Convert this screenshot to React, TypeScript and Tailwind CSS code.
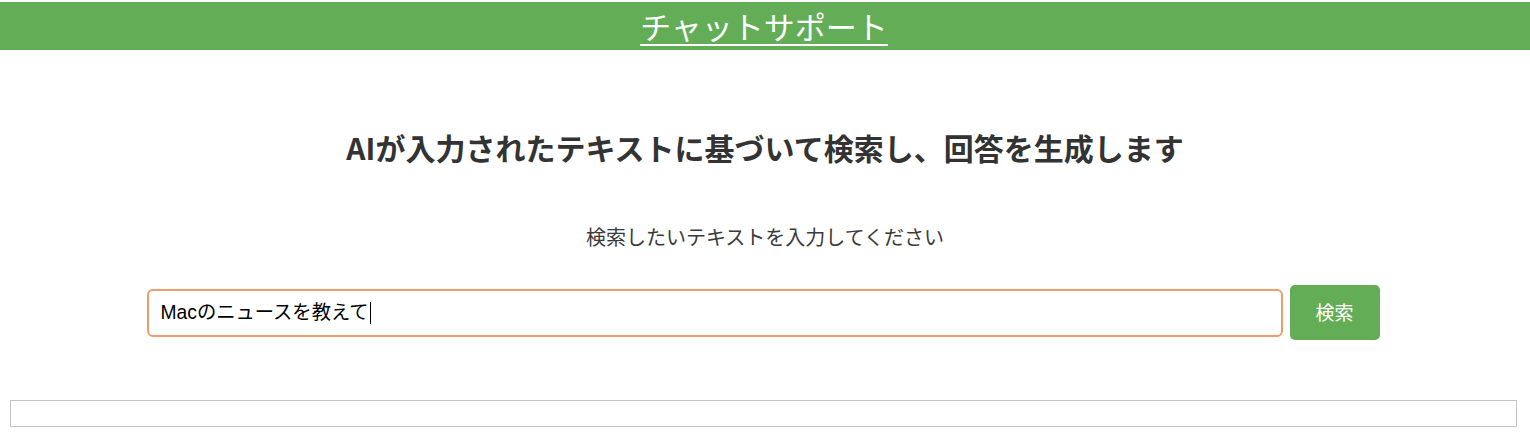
const jp = { fontFamily: '"Noto Sans CJK JP", "Noto Sans", sans-serif' };

const App = () => {
  return (
    <div className="min-h-screen bg-white pt-[2px]" style={jp}>
      {/* Header bar */}
      <header className="h-[48px] bg-[#64ad57] flex items-center justify-center">
        <h1 className="text-[31px] leading-[48px] text-white underline decoration-2 underline-offset-[5px] -translate-x-[1px]">
          チャットサポート
        </h1>
      </header>

      <main className="flex flex-col items-center">
        <h2 className="mt-[74px] text-[30px] leading-[46px] font-bold text-[#333333]">
          AIが入力されたテキストに基づいて検索し、回答を生成します
        </h2>

        <p className="mt-[52px] text-[20px] leading-[30px] text-[#3a3a3a]">
          検索したいテキストを入力してください
        </p>

        {/* Search row */}
        <div className="mt-[33px] flex items-center gap-[7px] -translate-x-[2px]">
          <div className="w-[1136px] h-[48px] border-2 border-[#f29c6b] rounded-[6px] flex items-center px-[12px]">
            <span
              className="text-[19.3px] text-black leading-none"
              style={{ fontFamily: '"Liberation Sans", "Noto Sans CJK JP", sans-serif' }}
            >
              Macのニュースを教えて
            </span>
            <span className="ml-[1px] w-px h-[22px] bg-black" />
          </div>
          <button className="w-[90px] h-[55px] rounded-[5px] bg-[#64ad57] text-white text-[19px]">
            検索
          </button>
        </div>
      </main>

      {/* Answer area */}
      <div className="mt-[60px] ml-[10px] w-[1507px] h-[27px] border border-[#c4c4c4]" />
    </div>
  );
};

export default App;
